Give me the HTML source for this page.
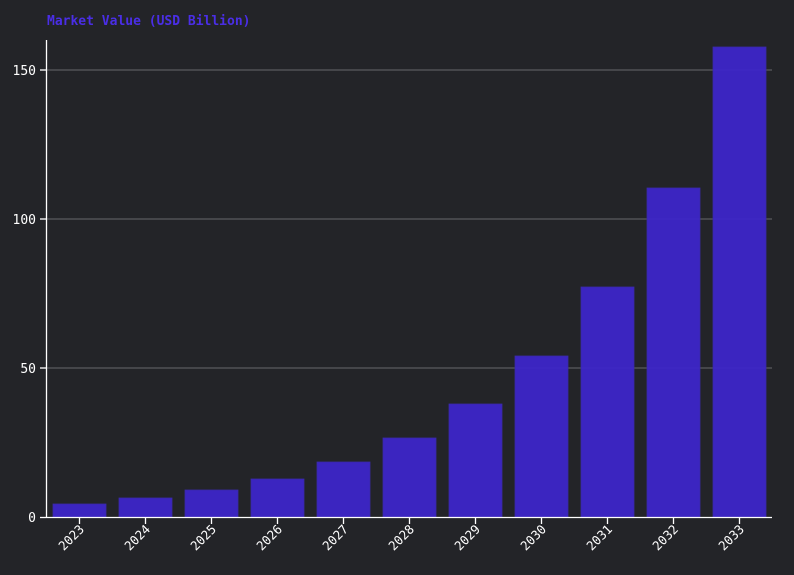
<!DOCTYPE html>
<html><head><meta charset="utf-8"><style>
html,body{margin:0;padding:0;background:#232428;}
svg{display:block;}
text{font-family:"DejaVu Sans Mono","Liberation Mono",monospace;}
</style></head><body>
<svg width="794" height="575" viewBox="0 0 794 575" xmlns="http://www.w3.org/2000/svg">
<rect width="794" height="575" fill="#232428"/>
<text x="47" y="25" fill="#4a2ee6" font-size="13" font-weight="bold">Market Value (USD Billion)</text>
<g stroke="#5a5a5e" stroke-width="1.2">
<line x1="46" y1="70" x2="772" y2="70"/>
<line x1="46" y1="219" x2="772" y2="219"/>
<line x1="46" y1="368" x2="772" y2="368"/>
</g>
<g fill="#3d26c8" fill-opacity="0.95" stroke="#3a2aa8" stroke-width="0.8">
<rect x="53" y="504" width="53" height="13.5"/>
<rect x="119" y="498" width="53" height="19.5"/>
<rect x="185" y="490" width="53" height="27.5"/>
<rect x="251" y="479" width="53" height="38.5"/>
<rect x="317" y="462" width="53" height="55.5"/>
<rect x="383" y="438" width="53" height="79.5"/>
<rect x="449" y="404" width="53" height="113.5"/>
<rect x="515" y="356" width="53" height="161.5"/>
<rect x="581" y="287" width="53" height="230.5"/>
<rect x="647" y="188" width="53" height="329.5"/>
<rect x="713" y="47" width="53" height="470.5"/>
</g>
<g stroke="#ffffff" stroke-width="1.3">
<line x1="46.5" y1="40" x2="46.5" y2="518"/>
<line x1="46" y1="517.5" x2="772" y2="517.5"/>
<line x1="40" y1="70" x2="46" y2="70"/>
<line x1="40" y1="219" x2="46" y2="219"/>
<line x1="40" y1="368" x2="46" y2="368"/>
<line x1="40" y1="517.5" x2="46" y2="517.5"/>
<g>
<line x1="79.5" y1="518" x2="79.5" y2="524"/>
<line x1="145.5" y1="518" x2="145.5" y2="524"/>
<line x1="211.5" y1="518" x2="211.5" y2="524"/>
<line x1="277.5" y1="518" x2="277.5" y2="524"/>
<line x1="343.5" y1="518" x2="343.5" y2="524"/>
<line x1="409.5" y1="518" x2="409.5" y2="524"/>
<line x1="475.5" y1="518" x2="475.5" y2="524"/>
<line x1="541.5" y1="518" x2="541.5" y2="524"/>
<line x1="607.5" y1="518" x2="607.5" y2="524"/>
<line x1="673.5" y1="518" x2="673.5" y2="524"/>
<line x1="739.5" y1="518" x2="739.5" y2="524"/>
</g>
</g>
<g fill="#ffffff" font-size="13" text-anchor="end">
<text x="36" y="75">150</text>
<text x="36" y="224">100</text>
<text x="36" y="373">50</text>
<text x="36" y="522">0</text>
</g>
<g fill="#ffffff" font-size="12.5" text-anchor="end">
<text transform="translate(85,530) rotate(-45)">2023</text>
<text transform="translate(151,530) rotate(-45)">2024</text>
<text transform="translate(217,530) rotate(-45)">2025</text>
<text transform="translate(283,530) rotate(-45)">2026</text>
<text transform="translate(349,530) rotate(-45)">2027</text>
<text transform="translate(415,530) rotate(-45)">2028</text>
<text transform="translate(481,530) rotate(-45)">2029</text>
<text transform="translate(547,530) rotate(-45)">2030</text>
<text transform="translate(613,530) rotate(-45)">2031</text>
<text transform="translate(679,530) rotate(-45)">2032</text>
<text transform="translate(745,530) rotate(-45)">2033</text>
</g>
</svg>
</body></html>
